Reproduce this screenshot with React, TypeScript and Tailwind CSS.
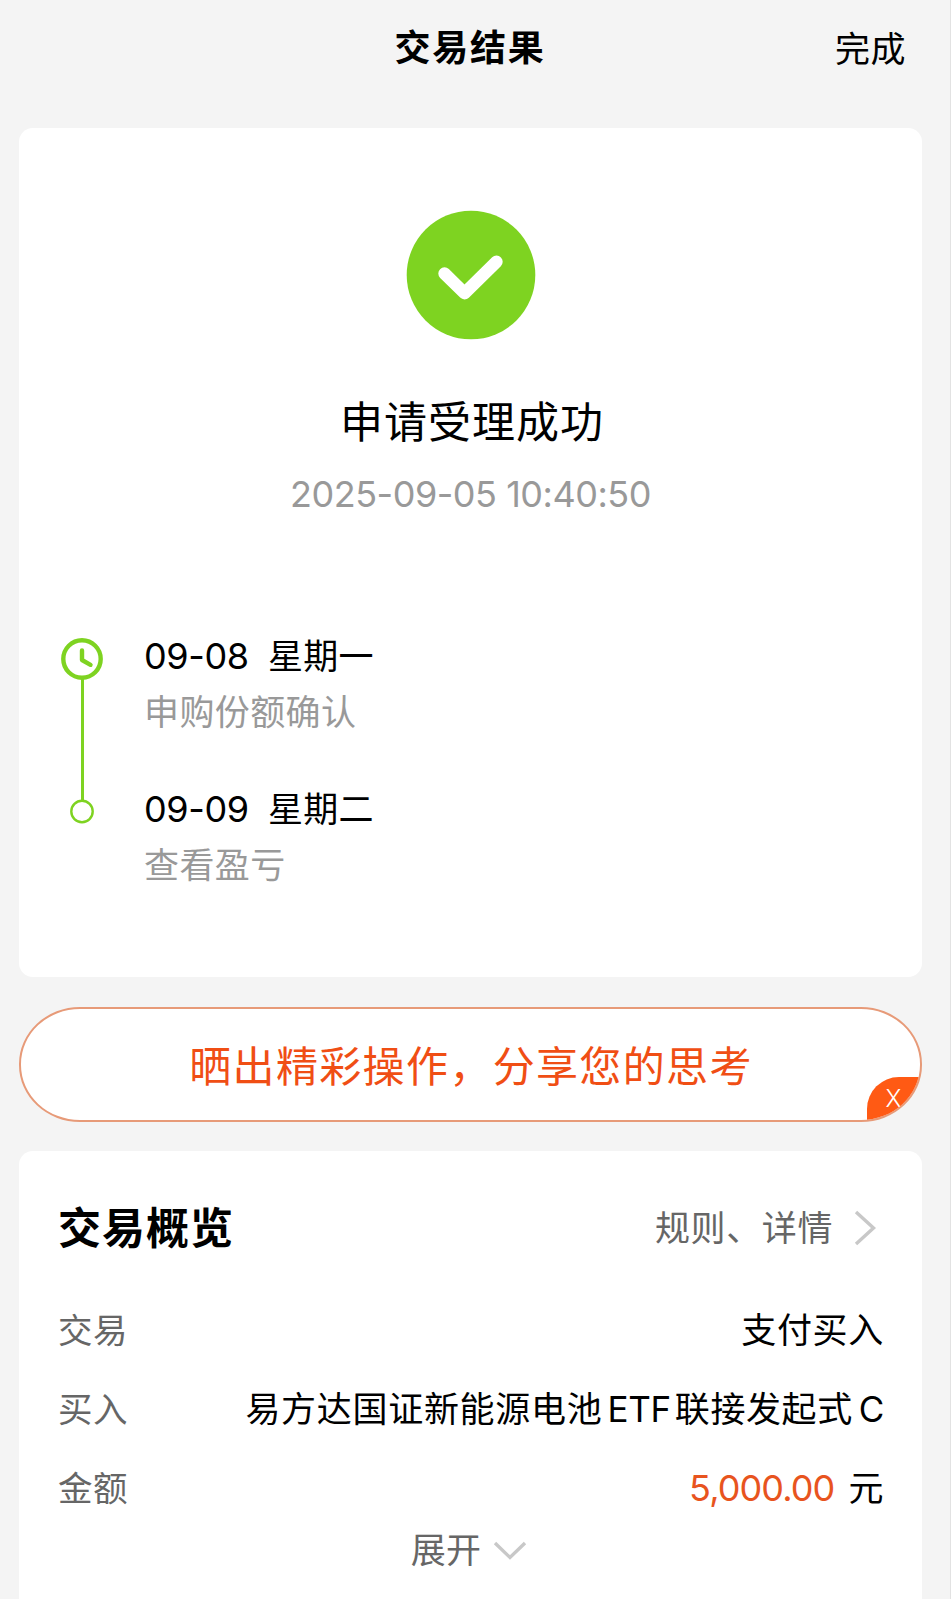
type StepProps = { date: string; day: string; note: string };

const rows = [
  { label: "交易", value: "支付买入" },
  { label: "买入", value: "易方达国证新能源电池", code: "ETF", tail: "联接发起式", suffix: "C" },
];

export default function App() {
  return (
    <div className="h-[1599px] w-[951px] overflow-hidden border-r border-[#e2e2e2] bg-[#f4f4f4] font-['Inter','Noto_Sans_CJK_SC',sans-serif] text-[35px] tracking-[0.6px] text-black">
      <Header />
      <main className="ml-[19px] w-[903px]">
        <ResultCard />
        <ShareBanner />
        <Overview />
      </main>
    </div>
  );
}

function Header() {
  return (
    <header className="relative flex h-32 justify-center pt-6">
      <h1 className="-ml-2.5 h-12 text-[36px] leading-[48px] font-bold tracking-[1.7px]">交易结果</h1>
      <button className="absolute top-[25px] right-[44px] h-12 leading-[48px] tracking-[0.5px]">完成</button>
    </header>
  );
}

function ResultCard() {
  return (
    <section className="h-[849px] rounded-[14px] bg-white pt-[82px]">
      <div className="flex flex-col items-center">
        <svg width="130" height="130" viewBox="0 0 130 130" aria-hidden>
          <circle cx="65" cy="65" r="64.3" fill="#7ed321" />
          <path d="M38.5 63.5L58.5 83.2L90.5 51.8" fill="none" stroke="#fff" strokeWidth="12.4" strokeLinecap="round" strokeLinejoin="round" />
        </svg>
        <h2 className="mt-[52px] ml-[3px] h-[60px] text-[43px] leading-[60px] tracking-[1px]">申请受理成功</h2>
        <p className="mt-[18px] h-12 text-[36px] leading-[48px] tracking-[-0.48px] text-[#999]">2025-09-05 10:40:50</p>
      </div>

      <div className="mt-[120px] flex pl-[41px]">
        <svg className="-mt-px" width="44" height="190" viewBox="0 0 44 190" fill="none" stroke="#7ed321" aria-hidden>
          <circle cx="22" cy="22" r="18.7" strokeWidth="4.4" />
          <path d="M22 13.5V23L30.5 27.8" strokeWidth="4.4" strokeLinecap="round" strokeLinejoin="round" />
          <path d="M22.5 42V164" strokeWidth="3" />
          <circle cx="22" cy="174.5" r="10.7" strokeWidth="2.4" />
        </svg>
        <div className="ml-[40px]">
          <Step date="09-08" day="星期一" note="申购份额确认" />
          <Step date="09-09" day="星期二" note="查看盈亏" />
        </div>
      </div>
    </section>
  );
}

function Step({ date, day, note }: StepProps) {
  return (
    <div className="-mt-[6px] mb-[6px] h-[152.5px]">
      <div className="flex h-12 leading-[48px]">
        <span className="w-[124px] text-[36px] tracking-[-0.4px]">{date}</span>
        <span className="tracking-[0.2px]">{day}</span>
      </div>
      <div className="mt-2 h-12 leading-[48px] tracking-[0.4px] text-[#999]">{note}</div>
    </div>
  );
}

function ShareBanner() {
  return (
    <section className="relative mt-[30px] h-[115px] overflow-hidden rounded-[61px/57px] border-2 border-[#e79a78] bg-white">
      <p className="pl-px text-center text-[42px] leading-[115px] tracking-[1.35px] text-[#f04e14]">晒出精彩操作，分享您的思考</p>
      <button className="absolute right-0 bottom-0 h-[43px] w-[53px] rounded-tl-[32px] bg-[#ff5a14] text-center text-[24px] leading-[42px] font-light tracking-normal text-white">X</button>
    </section>
  );
}

function Overview() {
  return (
    <section className="mt-[29px] h-[460px] rounded-t-[14px] bg-white pt-[47px] pr-[38px] pl-[39px]">
      <div className="flex h-[60px] items-center justify-between leading-[60px]">
        <h2 className="text-[43px] font-bold tracking-[1px]">交易概览</h2>
        <div className="flex items-center text-[#666]">
          <span>规则、详情</span>
          <svg className="mr-[7px] ml-5" width="24" height="36" viewBox="0 0 24 36" fill="none" stroke="#c8c8c8" strokeWidth="3.4" aria-hidden>
            <path d="M3 2L20.5 18L3 34" />
          </svg>
        </div>
      </div>
      <div className="mt-[33px]">
        {rows.map((r) => (
          <div key={r.label} className="flex h-[79px] justify-between leading-[79px]">
            <span className="text-[34.5px] text-[#666]">{r.label}</span>
            <span className="flex">
              <span className="tracking-[0.7px]">{r.value}</span>
              {r.code && <span className="ml-[5px] tracking-[-0.3px]">{r.code}</span>}
              {r.tail && <span className="ml-[4px]">{r.tail}</span>}
              {r.suffix && <span className="ml-[6px] tracking-[-0.4px]">{r.suffix}</span>}
            </span>
          </div>
        ))}
        <div className="flex h-[79px] justify-between leading-[79px]">
          <span className="text-[34.5px] text-[#666]">金额</span>
          <span className="flex">
            <span className="mr-[14px] text-[36px] tracking-[-0.9px] text-[#e8541e]">5,000.00</span>
            <span>元</span>
          </span>
        </div>
      </div>
      <button className="mx-auto flex h-11 items-center leading-[44px] text-[#666]">
        <span className="tracking-[0.2px]">展开</span>
        <svg className="mt-0.5 mr-1 ml-3" width="34" height="20" viewBox="0 0 34 20" fill="none" stroke="#c8c8c8" strokeWidth="3.4" aria-hidden>
          <path d="M2 2L17 16.5L32 2" />
        </svg>
      </button>
    </section>
  );
}
